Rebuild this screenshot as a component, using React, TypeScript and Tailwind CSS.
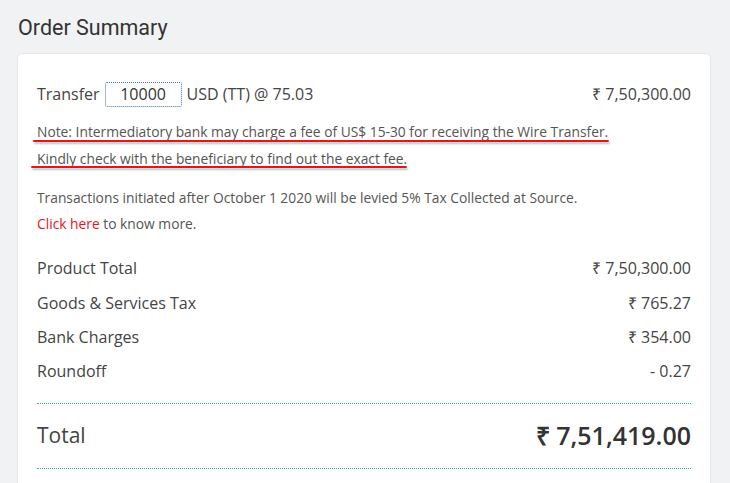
const rows = [
  { label: "Product Total", value: "₹ 7,50,300.00" },
  { label: "Goods & Services Tax", value: "₹ 765.27" },
  { label: "Bank Charges", value: "₹ 354.00" },
  { label: "Roundoff", value: "- 0.27" },
];

export default function App() {
  return (
    <div className="h-[483px] overflow-hidden bg-[#f1f2f4] pl-[17px] pr-[19px] pt-[14px] font-['Open_Sans',sans-serif] text-[#444]">
      <h1 className="ml-px font-['Roboto',sans-serif] text-[21.5px] leading-7 text-[#333]">
        Order Summary
      </h1>
      <div className="mt-[11px] h-[500px] rounded-[5px] border border-[#e6e7ea] bg-white px-[19px] pt-[25px]">
        <div className="flex h-[30px] items-center justify-between text-[16px]">
          <div className="flex items-center">
            <span>Transfer</span>
            <span className="ml-[5px] mr-[5px] flex h-[25px] w-[77px] items-center justify-center rounded-[2px] border border-dotted border-[#3b6fc4] text-[#333]">
              10000
            </span>
            <span>USD (TT) @ 75.03</span>
          </div>
          <span>₹ 7,50,300.00</span>
        </div>

        <div className="mt-[9px] text-[13.8px] leading-[27px] text-[#555]">
          <p className="relative">
            Note: Intermediatory bank may charge a fee of US$ 15-30 for receiving the Wire Transfer.
            <span className="absolute left-[-4px] top-[22px] h-[2px] w-[576px] rounded-full bg-[#e8141c] shadow-[1px_2px_2px_rgba(0,0,0,0.25)]" />
          </p>
          <p className="relative">
            Kindly check with the beneficiary to find out the exact fee.
            <span className="absolute left-[-6px] top-[21px] h-[2px] w-[376px] rounded-full bg-[#e8141c] shadow-[1px_2px_2px_rgba(0,0,0,0.25)]" />
          </p>
          <p className="mt-[12px]">
            Transactions initiated after October 1 2020 will be levied 5% Tax Collected at Source.
          </p>
          <p className="-mt-px">
            <span className="text-[#e8141c]">Click here</span> to know more.
          </p>
        </div>

        <div className="mt-[14px] text-[16px]">
          {rows.map((r) => (
            <div key={r.label} className="flex h-[34.4px] items-center justify-between">
              <span>{r.label}</span>
              <span>{r.value}</span>
            </div>
          ))}
        </div>

        <div className="mt-[14px] border-t border-dotted border-[#3cb371]" />
        <div className="flex h-[64px] items-center justify-between">
          <span className="text-[21px]">Total</span>
          <span className="text-[25px] font-semibold text-[#333]">₹ 7,51,419.00</span>
        </div>
        <div className="border-t border-dotted border-[#3cb371]" />
      </div>
    </div>
  );
}
